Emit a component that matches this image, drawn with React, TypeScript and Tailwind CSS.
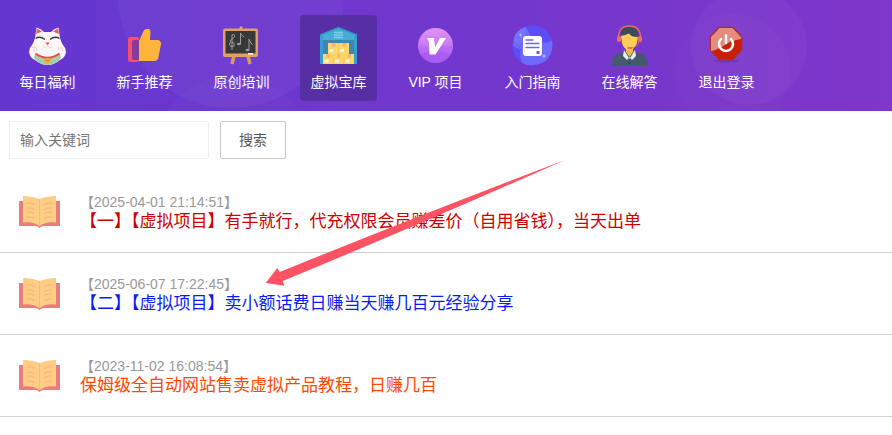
import type { ReactNode } from "react";

const CatIcon = () => (
  <svg viewBox="0 0 41 41" className="size-[41px]" aria-hidden="true">
    <path d="M8 13 L9.500 2.500 Q14 3.500 17 7 H24 Q27 3.500 31.500 2.500 L33 13 Q34 17 36 20 Q39 23 39 27 Q38 33 33 35 Q27 40 20.500 40 Q14 40 8 35 Q3 33 2 27 Q2 23 5 20 Q7 17 8 13Z" fill="#fdf6f7" />
    <path d="M9 9 L10 3.500 L15 6.500Z M32 9 L31 3.500 L26 6.500Z" fill="#ee5a5c" />
    <path d="M8.500 13.500 Q13 10.500 18 14.500 M23 14.500 Q28 10.500 32.500 13.500" stroke="#3d3739" strokeWidth="1.300" fill="none" />
    <path d="M18.500 17.500 H22.500 L20.500 20.500Z" fill="#e84f4f" />
    <path d="M20.500 19.500 V21 Q18 24 15.500 21.500 M20.500 21 Q23 24 25.500 21.500" stroke="#f0c4c6" fill="none" strokeWidth=".7" />
    <path d="M5 22 L9 23 M6 24 L8 27 M9 22 L10 26 M31 22 L32 25 M34 22 L36 26" stroke="#f6b9bc" strokeWidth=".8" />
    <path d="M8 29 Q20.500 36 33 29 L34 33 Q29 40 20.500 40 Q12 40 7 33Z" fill="#a8cda8" />
    <path d="M8.500 28.500 Q20.500 37 32.500 28.500" stroke="#e94a4d" strokeWidth="2" fill="none" />
    <circle cx="20.500" cy="36" r="3" fill="#f3b22b" />
    <path d="M18 35.500 H23" stroke="#d88a14" strokeWidth=".8" />
  </svg>
);

const ThumbIcon = () => (
  <svg viewBox="0 0 41 41" className="size-[41px]" aria-hidden="true">
    <rect x="4" y="12" width="11" height="25" rx="2" fill="#f94f6d" />
    <rect x="8" y="15" width="8" height="20" rx="2" fill="#873b9b" />
    <path d="M15 16 L20 5 Q22 3.500 25 4 Q26.500 4.500 26.500 7 L26 15 H34 Q37 15.500 37 19 L34.500 32 Q34 36 30 36 H15Z" fill="#ffb53c" />
  </svg>
);

const BoardIcon = () => (
  <svg viewBox="0 0 41 41" className="size-[41px]" aria-hidden="true">
    <path d="M13 31 L11 39 M27 31 L29 39" stroke="#dc9b55" strokeWidth="3.500" />
    <path d="M18.500 4 V2 Q20 .5 21.500 2 V4" fill="#e5a760" />
    <rect x="2" y="3.500" width="35" height="28.500" rx="2" fill="#e0a162" />
    <rect x="4.500" y="6" width="30" height="22.500" fill="#383838" />
    <path d="M11 25 V10 Q14 8 13.500 12 Q8.500 15 8.500 19 Q9 23 13 21 Q14 17 10.500 17.500 M19.500 19 V8 Q20 10 23 12 M28 25 V14 Q29 17 31.500 20" stroke="#a5a5a5" strokeWidth=".9" fill="none" />
    <ellipse cx="18" cy="19" rx="2" ry="1.300" fill="#999" />
    <ellipse cx="26.500" cy="25" rx="2" ry="1.300" fill="#999" />
    <rect x="27" y="28" width="5" height="1.500" fill="#fff" />
  </svg>
);

const WarehouseIcon = () => (
  <svg viewBox="0 0 41 41" className="size-[41px]" aria-hidden="true">
    <path d="M2 9.500 L20.500 2 L39 9.500 V39 H2Z" fill="#49acd5" />
    <path d="M2 9.500 L20.500 2 L39 9.500 V11 L20.500 3.500 L2 11Z" fill="#2d94c2" />
    <path d="M5 15 H36 V39 H5Z" fill="#4286ad" />
    <path d="M2 11 H5 V39 H2Z M36 11 H39 V39 H36Z" fill="#35a0cb" />
    <path d="M16 7.500 H25 M16 10 H25 M16 12.500 H25" stroke="#7fcde9" strokeWidth="1.500" />
    <path d="M10 18 H31 V39 H10Z M5 29 H36 V39 H5Z" fill="#ffd767" />
    <path d="M14 18 H17.500 V22 H14Z M24.500 18 H28 V22 H24.500Z M8.500 29 H12 V33 H8.500Z M19 29 H22.500 V33 H19Z M29.500 29 H33 V33 H29.500Z" fill="#f9b675" />
    <path d="M11.500 24 H15.500 V27 H11.500Z M22 24 H26 V27 H22Z M6.500 34.500 H10.500 V37.500 H6.500Z M17 34.500 H21 V37.500 H17Z M27.500 34.500 H31.500 V37.500 H27.500Z" fill="#fff3da" />
    <path d="M20.500 18 V29 M15.500 29 V39 M26 29 V39" stroke="#f9c445" strokeWidth=".8" />
  </svg>
);

const VipIcon = () => (
  <svg viewBox="0 0 41 41" className="size-[41px]" aria-hidden="true">
    <defs>
      <linearGradient id="vip" x1="0" y1="0" x2="0" y2="1">
        <stop stopColor="#e093f2" />
        <stop offset="1" stopColor="#ae62f4" />
      </linearGradient>
    </defs>
    <circle cx="20.500" cy="20.500" r="17.500" fill="url(#vip)" />
    <path d="M3 21 Q12 19 17 26 Q28 18 38 22 Q37 37 20.500 38 Q5 38 3 21Z" fill="#aa5cf0" opacity=".35" />
    <path d="M5 29 Q20 22 36 29 Q30 38 20.500 38 Q11 38 5 29Z" fill="#9b4cf2" opacity=".35" />
    <path d="M12 13 H19 L20 22.500 L25 13 H31 L20.500 29.500 H14.500 L14 17 Z" fill="#fff" />
  </svg>
);

const GuideIcon = () => (
  <svg viewBox="0 0 41 41" className="size-[41px]" aria-hidden="true">
    <circle cx="20.500" cy="20.500" r="20" fill="#5b4ef8" />
    <path d="M2 13 Q5 4 14 2 Q18 12 24 16 Q32 19 40 16 Q42 29 32 37 Q20 43 10 38 Q7 30 9 24 Q3 23 1 21Z" fill="#6f69ff" />
    <path d="M2 13 Q5 4 14 2 Q12 13 8 20 Q3 19 2 13Z" fill="#7f78ff" opacity=".6" />
    <rect x="11" y="11" width="19" height="20" rx="3" fill="#fff" />
    <path d="M14 15 H21 M14 18.500 H27 M14 22.500 H27" stroke="#6b66ee" strokeWidth="1.300" strokeLinecap="round" />
    <rect x="24.500" y="26" width="3" height="3" fill="#665ff5" />
    <path d="M8.500 8.500 V11.500 M7 10 H10 M32 29 V33 M30 31 H34" stroke="#b9b6ff" />
  </svg>
);

const AgentIcon = () => (
  <svg viewBox="0 0 41 41" className="size-[41px]" aria-hidden="true">
    <path d="M9.500 14 Q9 1 20.500 1 Q32 1 31.500 14" stroke="#ee6b5c" strokeWidth="1.300" fill="none" />
    <rect x="8" y="11" width="4" height="6" rx="2" fill="#f16f5f" />
    <rect x="29" y="11" width="4" height="6" rx="2" fill="#f16f5f" />
    <path d="M2 41 L4 33 Q5 29 10 28.500 L15 27 H26 L31 28.500 Q36 29 37 33 L39 41Z" fill="#455b6b" />
    <path d="M15 25 L20.500 34 L26 25 L27 31 L23 35 L20.500 32 L18 35 L14 31Z" fill="#e9eff1" />
    <path d="M17 21 H24 V27 L20.500 32 L17 27Z" fill="#f2b84a" />
    <path d="M12 11 Q12 5 20.500 5 Q29 5 29 11 L28 18 Q25 25 20.500 25.500 Q15 25 13 18Z" fill="#ffcd5a" />
    <path d="M12 11 Q10 2 20.500 2 Q31 3 29 12 Q22 12 20 8.500 Q16 10 12 11Z" fill="#3c4c5b" />
    <path d="M30.500 16 Q29 22 22 23" stroke="#ee6b5c" strokeWidth=".8" fill="none" />
    <path d="M18.500 22 H23 V24 H18.500Z" fill="#ee6b5c" />
    <circle cx="20.500" cy="38" r="1" fill="#293c4c" />
  </svg>
);

const PowerIcon = () => (
  <svg viewBox="0 0 41 41" className="size-[41px]" aria-hidden="true">
    <ellipse cx="20" cy="36" rx="13" ry="1.500" fill="#4c1f8b" opacity=".3" />
    <path d="M13 2 H27 L36 11.500 V25 L27 35 H13 L4 25 V11.500Z" fill="#c82008" stroke="#963560" />
    <path d="M13.500 3 H26.500 L35 12 V14 Q23 16 16 22 Q10 25 5 26 V12Z" fill="#e9a093" opacity=".85" />
    <path d="M15 14 A7 7 0 1 0 25 14" stroke="#fff" strokeWidth="2.500" fill="none" strokeLinecap="round" />
    <path d="M20 10.500 V18" stroke="#fff" strokeWidth="2.500" strokeLinecap="round" />
  </svg>
);

const BookIcon = () => (
  <svg viewBox="0 0 41 34" className="h-[34px] w-[41px] shrink-0" aria-hidden="true">
    <path d="M0 6 H41 V31 H25 Q22 31 20.500 33 Q19 31 16 31 H0Z" fill="#e97c7c" />
    <path d="M4 1 Q13 1 20.500 4 Q28 1 37 1 V27.500 Q27 26 20.500 31 Q14 26 4 27.500Z" fill="#fdcd86" />
    <path d="M20.500 4 V30" stroke="#f9bb78" />
    <path d="M8 8 Q12 7.500 16 9.500 M8 13 Q12 12.500 16 14.500 M8 17 Q12 16.500 16 18.500 M8 22 Q12 21.500 16 23.500 M33 8 Q29 7.500 25 9.500 M33 13 Q29 12.500 25 14.500 M33 17 Q29 16.500 25 18.500 M33 22 Q29 21.500 25 23.500" stroke="#f9b079" fill="none" />
  </svg>
);

const navItems: { label: string; icon: ReactNode; active?: boolean }[] = [
  { label: "每日福利", icon: <CatIcon /> },
  { label: "新手推荐", icon: <ThumbIcon /> },
  { label: "原创培训", icon: <BoardIcon /> },
  { label: "虚拟宝库", icon: <WarehouseIcon />, active: true },
  { label: "VIP 项目", icon: <VipIcon /> },
  { label: "入门指南", icon: <GuideIcon /> },
  { label: "在线解答", icon: <AgentIcon /> },
  { label: "退出登录", icon: <PowerIcon /> },
];

const posts = [
  { date: "2025-04-01 21:14:51", title: "【一】【虚拟项目】有手就行，代充权限会员赚差价（自用省钱），当天出单", color: "text-[#cc0000]" },
  { date: "2025-06-07 17:22:45", title: "【二】【虚拟项目】卖小额话费日赚当天赚几百元经验分享", color: "text-[#0a1cf5]" },
  { date: "2023-11-02 16:08:54", title: "保姆级全自动网站售卖虚拟产品教程，日赚几百", color: "text-[#ff4800]" },
];

export default function App() {
  return (
    <div className="relative bg-white font-['Liberation_Sans','Noto_Sans_CJK_SC',sans-serif] text-sm">
      <header className="relative overflow-hidden bg-linear-to-r from-[#6437d1] to-[#7f36ca]">
        <svg className="absolute top-0 left-0 h-full w-[892px]" viewBox="0 0 892 111" aria-hidden="true">
          <circle cx="231" cy="-5" r="113" fill="#fff" opacity=".04" />
          <circle cx="233" cy="153" r="78" fill="#fff" opacity=".015" />
          <circle cx="749" cy="47" r="58" fill="#fff" opacity=".03" />
          <circle cx="733" cy="72" r="58" fill="#fff" opacity=".015" />
        </svg>
        <nav className="relative flex gap-5 px-[9px] pt-[15px] pb-[10px]">
          {navItems.map((item) => (
            <a
              key={item.label}
              href="#"
              className={`flex h-[86px] w-[77px] shrink-0 flex-col items-center gap-[6px] rounded pt-[10px] text-white ${item.active ? "bg-[#582ea5]" : ""}`}
            >
              {item.icon}
              <span className="leading-5 whitespace-nowrap">{item.label}</span>
            </a>
          ))}
        </nav>
      </header>
      <main>
        <form className="flex gap-[11px] px-[9px] pt-[10px] pb-3">
          <input
            type="text"
            aria-label="输入关键词"
            placeholder="输入关键词"
            className="h-[38px] w-[200px] rounded-xs border border-[#eeeeee] px-[10px] placeholder:text-[#757575]"
          />
          <button type="button" className="h-[38px] w-[66px] rounded-xs border border-[#c9c9c9] text-[#555]">
            搜索
          </button>
        </form>
        <ul>
          {posts.map((post) => (
            <li key={post.date} className="flex h-[82px] items-center gap-5 border-b border-[#d2d2d2] px-[19px]">
              <BookIcon />
              <div>
                <time className="block leading-5 text-[#999]">【{post.date}】</time>
                <a href="#" className={`block text-[17px] leading-5 ${post.color}`}>{post.title}</a>
              </div>
            </li>
          ))}
        </ul>
      </main>
      <svg className="pointer-events-none absolute top-[160px] left-[265px] h-[127px] w-[301px]" viewBox="0 0 301 127" aria-hidden="true">
        <path d="M300 0 Q160 53 14.700 112 L12.300 108 L.7 123 L19.300 125.700 L17.700 121 Q170 58 300 0Z" fill="#ff5263" />
      </svg>
    </div>
  );
}
